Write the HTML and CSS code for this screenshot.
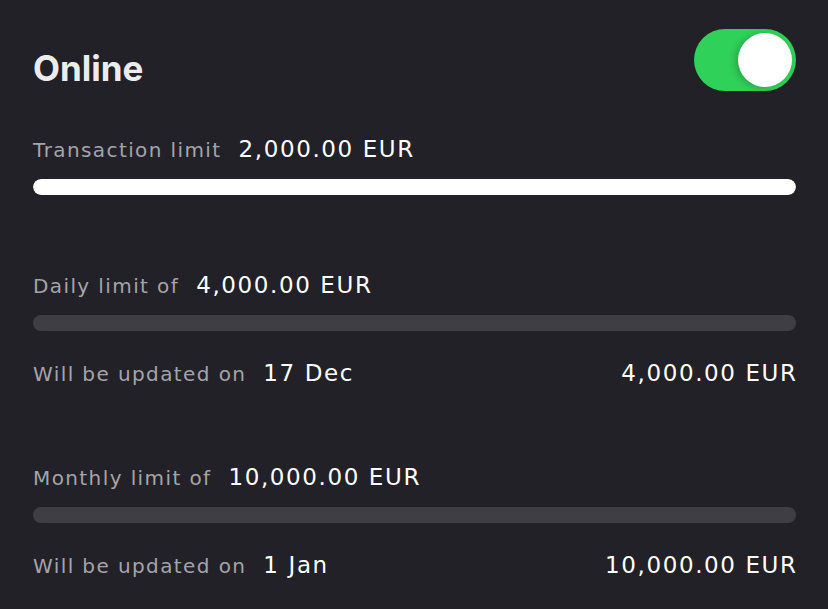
FILE: index.html
```html
<!DOCTYPE html>
<html>
<head>
<meta charset="utf-8">
<link rel="stylesheet" href="styles.css">
</head>
<body>
<div class="card">
  <div class="header">
    <h1 class="title">Online</h1>
    <div class="toggle"><div class="knob"></div></div>
  </div>

  <section class="limit limit-first">
    <div class="row">
      <span class="label">Transaction limit</span><span class="value">2,000.00 EUR</span>
    </div>
    <div class="bar"><div class="fill" style="width:100%"></div></div>
  </section>

  <section class="limit limit-daily">
    <div class="row">
      <span class="label">Daily limit of</span><span class="value">4,000.00 EUR</span>
    </div>
    <div class="bar"></div>
    <div class="row row-split">
      <span><span class="label">Will be updated on</span><span class="value">17 Dec</span></span>
      <span class="value">4,000.00 EUR</span>
    </div>
  </section>

  <section class="limit limit-monthly">
    <div class="row">
      <span class="label">Monthly limit of</span><span class="value">10,000.00 EUR</span>
    </div>
    <div class="bar"></div>
    <div class="row row-split">
      <span><span class="label">Will be updated on</span><span class="value">1 Jan</span></span>
      <span class="value">10,000.00 EUR</span>
    </div>
  </section>
</div>
</body>
</html>
```

FILE: styles.css
```css
* { box-sizing: border-box; }
html, body {
  margin: 0;
  padding: 0;
  background: #222127;
}
body {
  font-family: "DejaVu Sans", "Liberation Sans", sans-serif;
  color: #ffffff;
}
.card {
  width: 828px;
  height: 609px;
  padding: 29px 32px 0 33px;
  overflow: hidden;
}
.header {
  display: flex;
  justify-content: space-between;
  align-items: flex-start;
  height: 62px;
}
.title {
  margin: 22px 0 0;
  font-family: "Inter", "Liberation Sans", sans-serif;
  font-size: 35px;
  line-height: 34px;
  font-weight: 700;
  color: #ececef;
}
.toggle {
  width: 102px;
  height: 62px;
  border-radius: 31px;
  background: #30d158;
  display: flex;
  justify-content: flex-end;
  align-items: center;
  padding-right: 4px;
}
.knob {
  width: 54px;
  height: 54px;
  border-radius: 50%;
  background: #ffffff;
  box-shadow: -3px 1px 7px rgba(0,0,0,0.2);
}
.row {
  font-size: 23px;
  line-height: 24px;
  height: 25px;
}
.row-split {
  display: flex;
  justify-content: space-between;
  align-items: baseline;
  margin-top: 30px;
}
.label {
  font-size: 20px;
  letter-spacing: 1.4px;
  color: #a5a4aa;
  margin-right: 17px;
}
.value {
  font-size: 23px;
  letter-spacing: 1.6px;
  color: #ffffff;
}
.row-split > .value { margin-right: -1.6px; }
.bar {
  margin-top: 17px;
  height: 16px;
  border-radius: 8px;
  background: #3f3e45;
  overflow: hidden;
}
.fill {
  height: 100%;
  background: #ffffff;
  border-radius: 8px;
}
.limit-first { margin-top: 46px; }
.limit-daily { margin-top: 78px; }
.limit-monthly { margin-top: 79px; }
```
